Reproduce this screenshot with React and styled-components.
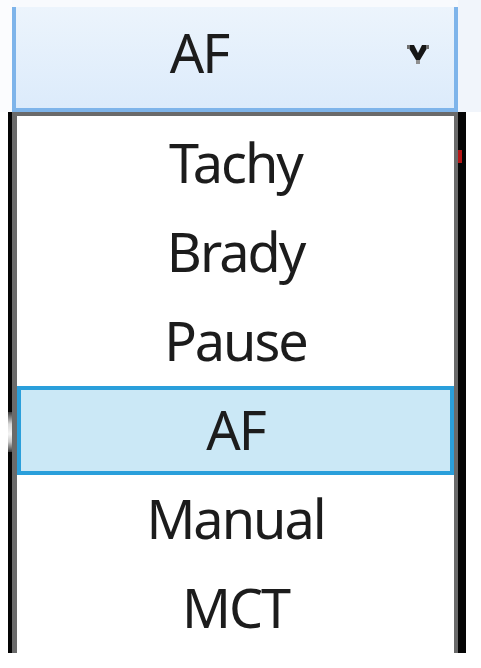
import React from "react"
import styled, { createGlobalStyle } from "styled-components"

const options = ["Tachy", "Brady", "Pause", "AF", "Manual", "MCT"]

const GlobalStyle = createGlobalStyle`
  html, body {
    margin: 0;
    padding: 0;
    background: #ffffff;
  }
  body {
    font-family: "Segoe UI", "Noto Sans", "Open Sans", sans-serif;
    color: #1c1c1c;
  }
`

const Page = styled.div`
  width: 481px;
  height: 668px;
  overflow: hidden;
`

const TopStrip = styled.div`
  display: flex;
  height: 112px;
`

const Gutter = styled.div`
  width: 12px;
  background: #fbfcfe;
`

const ComboColumn = styled.div`
  display: flex;
  flex-direction: column;
  width: 446px;
  background: #f8fafd;
  padding-top: 7px;
  box-sizing: border-box;
`

const ComboBox = styled.div`
  flex: 1;
  display: flex;
  align-items: center;
  border: 4px solid #7eb4ea;
  border-top: 0;
  background: linear-gradient(#ecf4fc, #dcebfb);
`

const ComboValue = styled.div`
  flex: 1;
  text-align: center;
  font-size: 54px;
  letter-spacing: -2px;
  line-height: 1;
  padding-bottom: 12px;
`

const ArrowCell = styled.div`
  width: 72px;
  display: flex;
  justify-content: center;
  padding-bottom: 8px;
`

const SideFill = styled.div`
  flex: 1;
  background: #f1f5fb;
`

const DropRow = styled.div`
  display: flex;
  padding-left: 8px;
`

const Shadow = styled.div`
  position: relative;
  width: 458px;
  border-left: 4px solid #050505;
  border-right: 8px solid #050505;
  box-sizing: border-box;
`

const List = styled.ul`
  list-style: none;
  margin: 0;
  padding: 3px 0 0 0;
  border-top: 4px solid #6a6a6a;
  border-left: 5px solid #6a6a6a;
  border-right: 4px solid #6a6a6a;
  background: #ffffff;
`

const Item = styled.li`
  height: 89px;
  box-sizing: border-box;
  display: flex;
  align-items: center;
  justify-content: center;
  font-size: 54px;
  letter-spacing: -2px;
  line-height: 1;
  padding-bottom: 4px;
  border: 4px solid ${(p) => (p.selected ? "#2a9fdb" : "transparent")};
  background: ${(p) => (p.selected ? "#cbe8f6" : "transparent")};
`

/* bits of whatever sits behind the popup, showing through its shadow */
const Tick = styled.span`
  position: absolute;
  right: -4px;
  top: 38px;
  width: 4px;
  height: 13px;
  background: #b51515;
`

const Glint = styled.span`
  position: absolute;
  left: -4px;
  top: 300px;
  width: 4px;
  height: 40px;
  background: linear-gradient(#3a3a3a, #d8d8d8 30%, #f4f4f4 55%, #c8c8c8 75%, #3a3a3a);
`

const Chevron = () => (
  <svg width="24" height="24" viewBox="0 0 24 24">
    <path d="M1 3 H8 L12 11 L16 3 H23 L14 18 H10 Z" fill="#161616" />
    <rect x="10" y="18" width="4" height="4" fill="#8f8f8f" />
    <rect x="1" y="3" width="3" height="4" fill="#6f6f6f" />
    <rect x="20" y="3" width="3" height="4" fill="#6f6f6f" />
  </svg>
)

export default function App() {
  return (
    <Page>
      <GlobalStyle />
      <TopStrip>
        <Gutter />
        <ComboColumn>
          <ComboBox>
            <ComboValue>AF</ComboValue>
            <ArrowCell>
              <Chevron />
            </ArrowCell>
          </ComboBox>
        </ComboColumn>
        <SideFill />
      </TopStrip>
      <DropRow>
        <Shadow>
          <List>
            {options.map((o) => (
              <Item key={o} selected={o === "AF"}>
                {o}
              </Item>
            ))}
          </List>
          <Tick />
          <Glint />
        </Shadow>
      </DropRow>
    </Page>
  )
}
